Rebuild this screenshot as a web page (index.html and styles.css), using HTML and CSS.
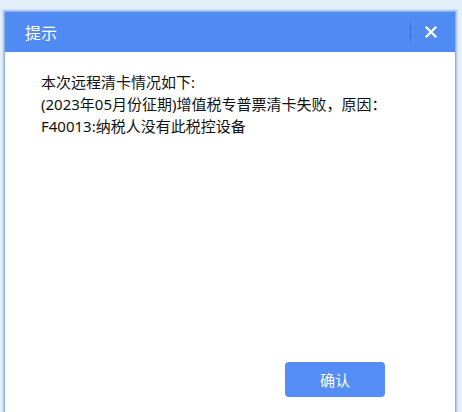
FILE: index.html
```html
<!DOCTYPE html>
<html lang="zh-CN">
<head>
<meta charset="utf-8">
<title>提示</title>
<link rel="stylesheet" href="styles.css">
</head>
<body>
<div class="dialog">
  <div class="dialog-header">
    <span class="dialog-title">提示</span>
    <span class="header-sep"></span>
    <span class="dialog-close">
      <svg width="12" height="12" viewBox="0 0 12 12"><path d="M1.5 1.5 L10.5 10.5 M10.5 1.5 L1.5 10.5" stroke="#fff" stroke-width="2.2" stroke-linecap="square" fill="none"/></svg>
    </span>
  </div>
  <div class="dialog-body">
    <div class="message">
      <p>本次远程清卡情况如下:</p>
      <p>(2023年05月份征期)增值税专普票清卡失败，原因：</p>
      <p>F40013:纳税人没有此税控设备</p>
    </div>
    <div class="dialog-footer">
      <button class="btn-ok">确认</button>
    </div>
  </div>
</div>
</body>
</html>
```

FILE: styles.css
```css
html, body {
  margin: 0;
  padding: 0;
}
body {
  background: #e3effa;
  font-family: "Microsoft YaHei", "Noto Sans CJK SC", sans-serif;
  overflow: hidden;
  height: 412px;
}
.dialog {
  margin: 12px 0 0 5px;
  width: 450px;
  height: 410px;
  display: flex;
  flex-direction: column;
  background: #fff;
  box-shadow: 0 0 0 1px #8fb0ea, 0 0 0 2px #b4cbef, 0 0 0 3px #cfdff5;
}
.dialog-header {
  height: 40px;
  background: #4f8bf3;
  display: flex;
  align-items: center;
  color: #fff;
}
.dialog-title {
  flex: 1;
  padding-left: 20px;
  font-size: 16px;
  line-height: 20px;
}
.header-sep {
  width: 1px;
  height: 22px;
  background: linear-gradient(#4f8bf3, #3a6fcc 30%, #3a6fcc 70%, #4f8bf3);
}
.dialog-close {
  width: 44px;
  display: flex;
  justify-content: center;
  align-items: center;
  padding-right: 4px;
  box-sizing: border-box;
}
.dialog-close svg {
  display: block;
}
.dialog-body {
  flex: 1;
  display: flex;
  flex-direction: column;
  padding: 19px 0 0 36px;
}
.message {
  font-family: "Segoe UI", "Noto Sans", "Noto Sans CJK SC", sans-serif;
  font-size: 15px;
  line-height: 22px;
  color: #111;
}
.message p {
  margin: 0;
}
.dialog-footer {
  margin-top: auto;
  display: flex;
  justify-content: flex-end;
  padding: 0 70px 25px 0;
}
.btn-ok {
  width: 100px;
  height: 35px;
  border: none;
  border-radius: 4px;
  background: #548df5;
  color: #fff;
  font-family: inherit;
  font-size: 15px;
  padding: 0;
}
```
